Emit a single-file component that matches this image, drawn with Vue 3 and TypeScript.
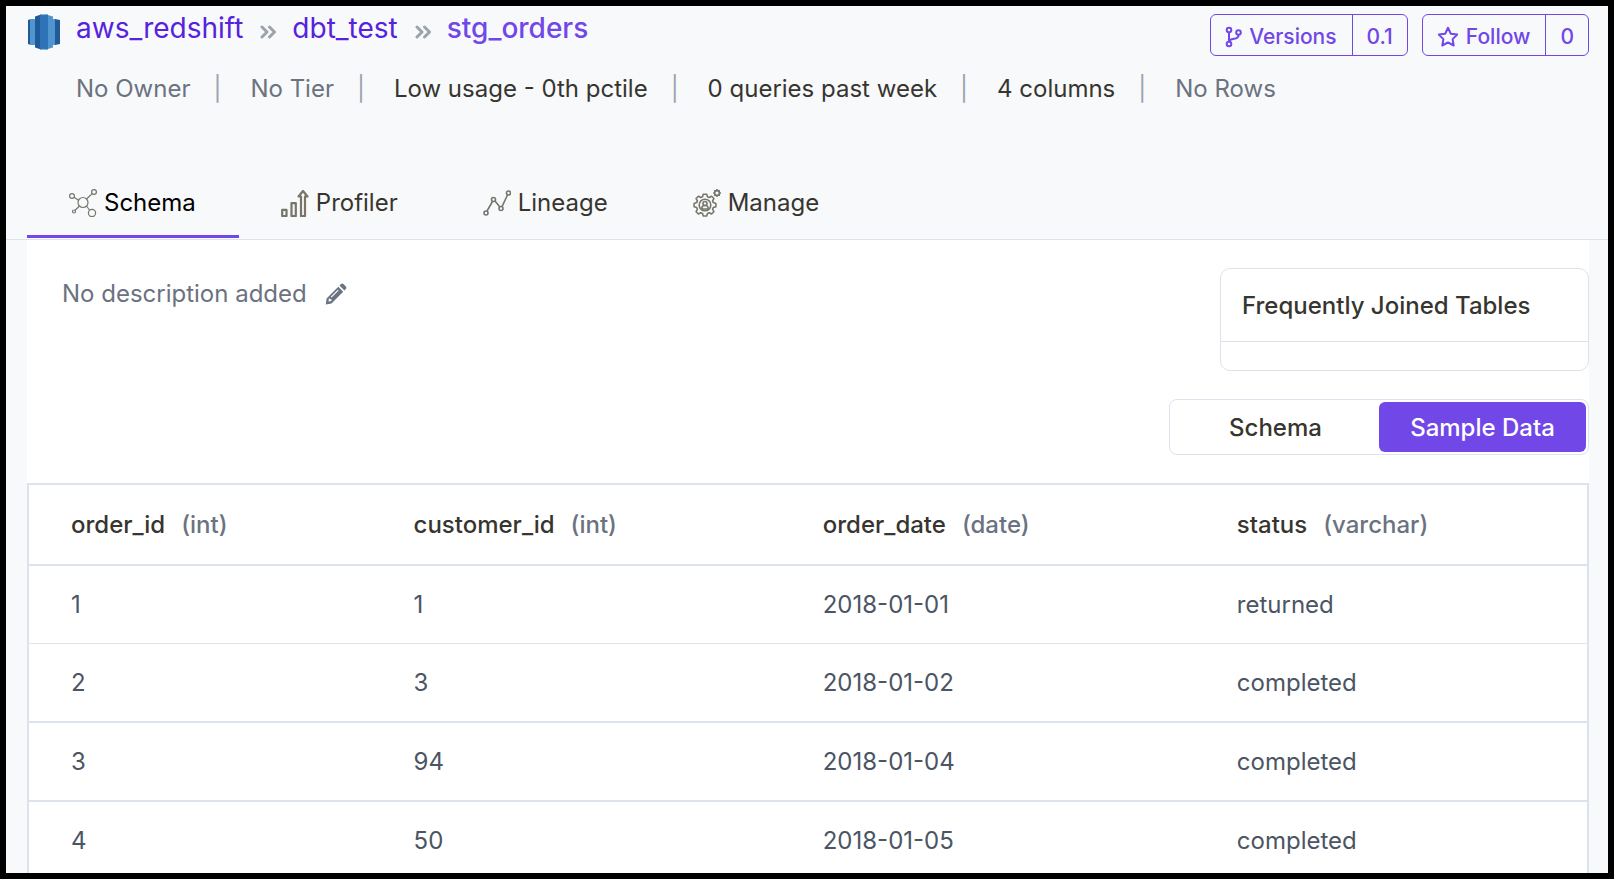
<script setup lang="ts">
import { ref } from 'vue'

interface Fact {
  text: string
  muted: boolean
}

interface Column {
  name: string
  type: string
}

const facts: Fact[] = [
  { text: 'No Owner', muted: true },
  { text: 'No Tier', muted: true },
  { text: 'Low usage - 0th pctile', muted: false },
  { text: '0 queries past week', muted: false },
  { text: '4 columns', muted: false },
  { text: 'No Rows', muted: true },
]

const tabs: string[] = ['Schema', 'Profiler', 'Lineage', 'Manage']
const activeTab = ref<string>('Schema')

const views: string[] = ['Schema', 'Sample Data']
const activeView = ref<string>('Sample Data')

const columns: Column[] = [
  { name: 'order_id', type: 'int' },
  { name: 'customer_id', type: 'int' },
  { name: 'order_date', type: 'date' },
  { name: 'status', type: 'varchar' },
]

const rows: string[][] = [
  ['1', '1', '2018-01-01', 'returned'],
  ['2', '3', '2018-01-02', 'completed'],
  ['3', '94', '2018-01-04', 'completed'],
  ['4', '50', '2018-01-05', 'completed'],
]
</script>

<template>
  <div class="frame">
    <header class="header">
      <div class="title-row">
        <nav class="breadcrumb" aria-label="Breadcrumb">
          <svg class="service-logo" viewBox="0 0 34 36" aria-hidden="true">
            <path fill="#205b98" d="M1 6 4 5v26l-3-1z" />
            <path fill="#5294cf" d="M3 5h6v26H3z" />
            <path fill="#5294cf" d="M25 5h4v26h-4z" />
            <path fill="#205b98" d="m28 5 5 1v24l-5 1z" />
            <path fill="#205b98" d="m8 2.500 6-2v35l-6-2z" />
            <path fill="#5294cf" d="m19 .5 7 2v31l-7 2z" />
            <path fill="#2e73b8" d="M13 .5h8v35h-8z" />
          </svg>
          <a class="crumb" href="#aws_redshift">aws_redshift</a>
          <svg class="chevrons" viewBox="0 0 17 14" aria-hidden="true">
            <path d="m2 2 5 5-5 5M9.500 2l5 5-5 5" />
          </svg>
          <a class="crumb" href="#dbt_test">dbt_test</a>
          <svg class="chevrons" viewBox="0 0 17 14" aria-hidden="true">
            <path d="m2 2 5 5-5 5M9.500 2l5 5-5 5" />
          </svg>
          <a class="crumb current" href="#stg_orders" aria-current="page">stg_orders</a>
        </nav>
        <div class="actions">
          <div class="action">
            <button type="button" class="action-main">
              <svg class="branch" viewBox="0 0 17 22" aria-hidden="true">
                <circle cx="4" cy="4" r="2.300" />
                <circle cx="4" cy="18" r="2.300" />
                <circle cx="13.500" cy="6.500" r="2.300" />
                <path d="M4 6v10M13.500 9c0 4-3 3.600-5.500 4-2 .3-4 .8-4 3" />
              </svg>
              Versions
            </button>
            <button type="button" class="action-count">0.1</button>
          </div>
          <div class="action">
            <button type="button" class="action-main">
              <svg class="star" viewBox="0 0 22 22" aria-hidden="true">
                <path d="m11 1.800 2.800 5.900 6.400.9-4.600 4.500 1.100 6.400L11 16.400l-5.700 3.100 1.100-6.400L1.800 8.600l6.400-.9z" />
              </svg>
              Follow
            </button>
            <button type="button" class="action-count">0</button>
          </div>
        </div>
      </div>

      <div class="facts">
        <template v-for="(fact, i) in facts" :key="fact.text">
          <span v-if="i > 0" class="bar" aria-hidden="true">|</span>
          <span :class="{ muted: fact.muted }">{{ fact.text }}</span>
        </template>
      </div>

      <div class="tabs" role="tablist">
        <button
          v-for="tab in tabs"
          :key="tab"
          type="button"
          role="tab"
          class="tab"
          :class="{ active: tab === activeTab }"
          :aria-selected="tab === activeTab"
          @click="activeTab = tab"
        >
          <svg v-if="tab === 'Schema'" class="tab-icon thin" viewBox="0 0 28 28" aria-hidden="true">
            <circle cx="14" cy="13.500" r="5" />
            <circle cx="3" cy="7" r="2.400" />
            <circle cx="25" cy="3" r="2.400" />
            <circle cx="5" cy="22.500" r="1.500" />
            <circle cx="23" cy="24" r="3.600" />
            <path d="m5 8.200 4.600 3M17.500 10l5.700-5.400M10.500 17l-4.400 4.300M17.500 17l3 4" />
          </svg>
          <svg v-else-if="tab === 'Profiler'" class="tab-icon thick" viewBox="0 0 28 28" aria-hidden="true">
            <path d="M1.200 20.800h4.300v6.200H1.200zM10.500 14.200h4.300V27h-4.300zM20 27V7.500h-2.500L22 2l4.500 5.500H24V27z" />
          </svg>
          <svg v-else-if="tab === 'Lineage'" class="tab-icon medium" viewBox="0 0 28 28" aria-hidden="true">
            <circle cx="3" cy="24" r="2" />
            <circle cx="10.500" cy="10.500" r="2" />
            <circle cx="18" cy="19.500" r="2" />
            <circle cx="25.500" cy="4" r="2" />
            <path d="m4 22 5.500-9.500M12 12l4.700 5.800M19 17.700l5.500-11.700" />
          </svg>
          <svg v-else class="tab-icon medium" viewBox="0 0 28 28" aria-hidden="true">
            <path d="M10.300 5.200h3.400l.8 2.600 1.700.7 2.400-1.300 2.300 2.300-1.300 2.400.7 1.700 2.600.8v3.400l-2.600.8-.7 1.700 1.300 2.400-2.300 2.300-2.400-1.300-1.700.7-.8 2.600h-3.400l-.8-2.600-1.700-.7-2.400 1.300-2.300-2.300 1.300-2.400-.7-1.700-2.600-.8v-3.400l2.600-.8.7-1.700-1.300-2.400 2.300-2.300 2.400 1.300 1.700-.7z" />
            <circle cx="12" cy="16" r="5.800" />
            <circle cx="12" cy="14.500" r="2" />
            <path d="M9 20v-1.500q0-2 3-2t3 2V20z" />
            <circle cx="24" cy="4" r="2.400" />
            <path d="M24 0v1.600M24 6.400V8M20.200 4h1.400M26.400 4H28M21.300 1.300l1 1M25.700 5.700l1 1M21.300 6.700l1-1M25.700 2.300l1-1" />
          </svg>
          {{ tab }}
        </button>
      </div>
    </header>

    <main class="panel">
      <div class="overview">
        <div class="description">
          <span>No description added</span>
          <button type="button" class="edit" aria-label="Edit description">
            <svg viewBox="0 0 22 22" aria-hidden="true">
              <path
                fill-rule="evenodd"
                d="m13.300 3.800 4.900 4.900L6.500 20.400.8 21.500 1.600 15.500zM4 15.500l-.6 3 3-.6v-1.600H5.200v-.8zM12.800 6.700l-7 7 .8.800 7-7z"
              />
              <path d="M14.500 2.600 16 1.100q1.200-1 2.400 0l2.500 2.500q1 1.200 0 2.400l-1.500 1.500z" />
            </svg>
          </button>
        </div>
        <section class="joined">
          <h2>Frequently Joined Tables</h2>
          <div class="joined-body"></div>
        </section>
      </div>

      <div class="switch-row">
        <div class="switch">
          <button
            v-for="view in views"
            :key="view"
            type="button"
            :class="{ selected: view === activeView }"
            :aria-pressed="view === activeView"
            @click="activeView = view"
          >
            {{ view }}
          </button>
        </div>
      </div>

      <table class="sample">
        <thead>
          <tr>
            <th v-for="column in columns" :key="column.name" scope="col">
              {{ column.name }}<span class="type">({{ column.type }})</span>
            </th>
          </tr>
        </thead>
        <tbody>
          <tr v-for="row in rows" :key="row[0]">
            <td v-for="(cell, i) in row" :key="i">{{ cell }}</td>
          </tr>
        </tbody>
      </table>
    </main>
  </div>
</template>

<style>
body {
  margin: 0;
}
</style>

<style scoped>
.frame {
  box-sizing: border-box;
  height: 100vh;
  overflow: hidden;
  border: 6px solid #000;
  background: #f8f9fb;
  color: #37352f;
  font-family: Inter, "Liberation Sans", sans-serif;
  font-size: 24px;
  line-height: 36px;
}

button {
  margin: 0;
  padding: 0;
  border: 0;
  background: none;
  color: inherit;
  font: inherit;
  cursor: pointer;
}

.header {
  padding: 0 19px 0 21px;
  border-bottom: 1px solid #dce3ec;
}

.title-row {
  display: flex;
  justify-content: space-between;
  align-items: flex-start;
  padding-top: 8px;
}

.breadcrumb {
  display: flex;
  align-items: center;
  font-size: 28px;
}

.service-logo {
  width: 34px;
  height: 36px;
  margin-right: 15px;
}

.crumb {
  color: #5522dd;
  text-decoration: none;
  line-height: 28px;
  padding-bottom: 8px;
}

.crumb.current {
  color: #7147e8;
  font-weight: 500;
}

.chevrons {
  width: 17px;
  height: 14px;
  margin: 0 15px 0 17px;
  fill: none;
  stroke: #9ca3af;
  stroke-width: 3;
  stroke-linecap: round;
  stroke-linejoin: round;
}

.actions {
  display: flex;
  gap: 14px;
}

.action {
  display: flex;
  height: 40px;
  border: 1px solid #7147e8;
  border-radius: 6px;
  color: #7147e8;
  font-size: 21px;
  font-weight: 500;
}

.action-main {
  display: flex;
  align-items: center;
  padding: 4px 15px 0 14px;
  gap: 7px;
}

.action-count {
  padding: 4px 14px 0;
  border-left: 1px solid #7147e8;
}

.branch,
.star {
  height: 22px;
  fill: none;
  stroke: currentColor;
  stroke-width: 2;
  stroke-linejoin: round;
}

.branch {
  width: 17px;
}

.star {
  width: 22px;
}

.facts {
  display: flex;
  flex-wrap: wrap;
  padding: 15px 0 0 49px;
}

.muted {
  color: #6b7280;
}

.bar {
  margin: 0 29px 0 23px;
  color: #9ca3af;
}

.tabs {
  display: flex;
  margin-top: 64px;
}

.tab {
  display: flex;
  align-items: center;
  gap: 7px;
  padding: 14px 43px 14px 42px;
  border-bottom: 3px solid transparent;
}

.tab.active {
  border-bottom-color: #7147e8;
  color: #000;
}

.tabs::after {
  content: "";
  height: 68px;
}

.tab-icon {
  width: 28px;
  height: 28px;
  fill: none;
  stroke: #77756c;
  stroke-linejoin: round;
}

.tabs {
  align-items: flex-start;
}

.thin {
  stroke-width: 1.2;
}

.medium {
  stroke-width: 1.6;
}

.thick {
  stroke-width: 2.2;
}

.panel {
  margin: 0 19px 0 21px;
  background: #fff;
}

.overview {
  display: flex;
  justify-content: space-between;
  align-items: flex-start;
  padding-top: 28px;
}

.description {
  display: flex;
  align-items: center;
  gap: 18px;
  padding: 8px 0 0 35px;
  color: #6b7280;
}

.edit svg {
  display: block;
  width: 22px;
  height: 22px;
  fill: currentColor;
}

.joined {
  box-sizing: border-box;
  width: 369px;
  border: 1px solid #dce3ec;
  border-radius: 10px;
}

.joined h2 {
  margin: 0;
  padding: 19px 21px 17px;
  border-bottom: 1px solid #dce3ec;
  font-size: 24px;
  font-weight: 500;
}

.joined-body {
  height: 28px;
}

.switch-row {
  display: flex;
  justify-content: flex-end;
  padding: 28px 0;
}

.switch {
  box-sizing: border-box;
  display: flex;
  width: 420px;
  padding: 2px;
  border: 1px solid #dce3ec;
  border-radius: 8px;
}

.switch button {
  flex: 1;
  padding: 8px 0 6px;
  border-radius: 6px;
  font-weight: 500;
}

.switch button.selected {
  background: #7147e8;
  color: #fff;
}

.sample {
  width: 100%;
  border: 2px solid #dce3ec;
  border-spacing: 0;
}

.sample th,
.sample td {
  padding: 21px 42px 20px;
  border-bottom: 2px solid #dce3ec;
  text-align: left;
  white-space: nowrap;
}

.sample th {
  padding-top: 22px;
  padding-bottom: 21px;
  font-weight: 500;
}

.sample td {
  color: #4b5563;
}

.sample tbody tr:first-child td {
  border-bottom-width: 1px;
}

.type {
  margin-left: 16px;
  color: #6b7280;
}
</style>
